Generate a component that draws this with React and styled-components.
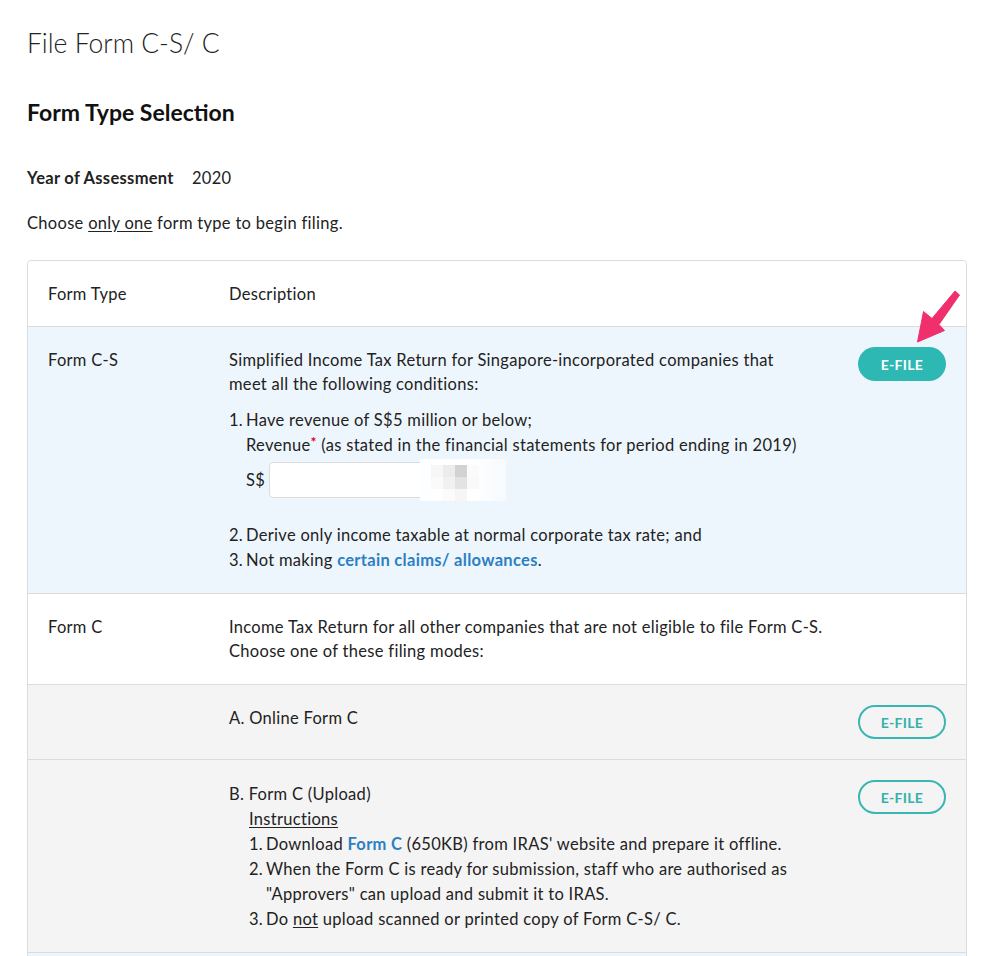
import React from "react";
import styled, { createGlobalStyle, css } from "styled-components";

const Global = createGlobalStyle`
  html, body { margin: 0; padding: 0; background: #fff; }
  body {
    font-family: Lato, "Noto Sans", sans-serif;
    font-size: 16.5px;
    letter-spacing: 0.3px;
    color: #222;
    -webkit-font-smoothing: antialiased;
  }
  * { box-sizing: border-box; }
`;

const Page = styled.div`
  padding: 25px 29px 0 27px;
  height: 956px;
  overflow: hidden;
`;

const Title = styled.h1`
  margin: 0;
  font-size: 26.5px;
  line-height: 36px;
  font-weight: 300;
  letter-spacing: 0;
  color: #222;
`;

const Subtitle = styled.h2`
  margin: 36px 0 0;
  font-size: 23px;
  line-height: 30px;
  font-weight: 700;
  letter-spacing: 0;
  color: #111;
`;

const YearRow = styled.div`
  margin-top: 39px;
  display: flex;
  line-height: 24px;
`;

const YearLabel = styled.span`
  width: 165px;
  font-weight: 700;
`;

const Intro = styled.p`
  margin: 21px 0 0;
  line-height: 24px;
`;

const U = styled.span`
  text-decoration: underline;
  text-underline-offset: 2px;
`;

const Table = styled.div`
  position: relative;
  margin-top: 25px;
  border: 1px solid #dcdcdc;
  border-radius: 4px;
`;

const tones = {
  white: "#ffffff",
  blue: "#eef6fd",
  grey: "#f4f4f4",
};

const Row = styled.div`
  display: flex;
  align-items: flex-start;
  padding: ${(p) => (p.$loose ? "22px" : "21px")} 20px ${(p) => (p.$tall ? "21px" : "20px")} 0;
  background: ${(p) => tones[p.$tone || "white"]};
  line-height: ${(p) => (p.$loose ? "25px" : "24px")};
  min-height: ${(p) => p.$min || 0}px;
  & + & { border-top: 1px solid #dcdcdc; }
  &:first-child { border-radius: 4px 4px 0 0; }
`;

const TypeCell = styled.div`
  width: 201px;
  flex-shrink: 0;
  padding-left: 20px;
`;

const DescCell = styled.div`
  flex: 1;
  min-width: 0;
  white-space: nowrap;
`;

const ActionCell = styled.div`
  width: 88px;
  margin-left: 48px;
  flex-shrink: 0;
`;

const Button = styled.button`
  display: block;
  width: 88px;
  height: 34px;
  margin-top: ${(p) => (p.$lift ? "-2px" : "-1px")};
  border-radius: 17px;
  font-family: Lato, "Noto Sans", sans-serif;
  font-size: 14px;
  font-weight: 700;
  letter-spacing: 0.3px;
  cursor: pointer;
  ${(p) =>
    p.$filled
      ? css`
          background: #2db8b3;
          border: none;
          color: #fff;
        `
      : css`
          background: transparent;
          border: 2px solid #3ab6b2;
          color: #33b1ad;
        `}
`;

const Para = styled.p`
  margin: 0;
`;

const List = styled.div`
  margin-top: ${(p) => p.$mt || 0}px;
  padding-left: ${(p) => p.$indent || 0}px;
  line-height: 25px;
`;

const Item = styled.div`
  display: flex;
  margin-top: ${(p) => p.$mt || 0}px;
`;

const Num = styled.span`
  width: 17px;
  flex-shrink: 0;
`;

const ItemBody = styled.div`
  flex: 1;
`;

const Link = styled.a`
  color: #2b7fc2;
  font-weight: 700;
  text-decoration: none;
`;

const Req = styled.span`
  color: #d0021b;
  font-size: 14px;
  font-weight: 700;
  vertical-align: top;
  line-height: 18px;
`;

const AmountRow = styled.div`
  display: flex;
  align-items: center;
  margin-top: 4px;
  height: 36px;
`;

const Currency = styled.span`
  width: 23px;
`;

const InputWrap = styled.div`
  position: relative;
  width: 236px;
  height: 36px;
`;

const Input = styled.input`
  width: 100%;
  height: 100%;
  border: 1px solid #dcdcdc;
  border-radius: 4px;
  background: #fff;
  padding: 0 10px;
  font-size: 16px;
  font-family: inherit;
  outline: none;
`;

const Mosaic = styled.div`
  position: absolute;
  left: 151px;
  top: -3px;
  width: 86px;
  height: 42px;
  background: linear-gradient(90deg, #fdfeff 0%, #ffffff 60%, #f6fafe 100%);
  display: grid;
  grid-template-columns: 12px 12px 12px 12px;
  grid-template-rows: 12px 12px 12px;
  padding: 6px 0 0 11px;
`;

const Tile = styled.span`
  background: ${(p) => p.$c};
`;

const Arrow = styled.svg`
  position: absolute;
  left: 873px;
  top: 19px;
  width: 70px;
  height: 70px;
  pointer-events: none;
`;

export default function App() {
  return (
    <>
      <Global />
      <Page>
        <Title>File Form C-S/ C</Title>
        <Subtitle>Form Type Selection</Subtitle>
        <YearRow>
          <YearLabel>Year of Assessment</YearLabel>
          <span>2020</span>
        </YearRow>
        <Intro>
          Choose <U>only one</U> form type to begin filing.
        </Intro>

        <Table>
          <Row>
            <TypeCell>Form Type</TypeCell>
            <DescCell>Description</DescCell>
          </Row>

          <Row $tone="blue">
            <TypeCell>Form C-S</TypeCell>
            <DescCell>
              <Para>
                Simplified Income Tax Return for Singapore-incorporated companies that
                <br />
                meet all the following conditions:
              </Para>
              <List $mt={12}>
                <Item>
                  <Num>1.</Num>
                  <ItemBody>
                    Have revenue of S$5 million or below;
                    <br />
                    Revenue<Req>*</Req> (as stated in the financial statements for period ending in 2019)
                    <AmountRow>
                      <Currency>S$</Currency>
                      <InputWrap>
                        <Input aria-label="Revenue" />
                        <Mosaic>
                          <Tile $c="#f7f7f7" />
                          <Tile $c="#ececec" />
                          <Tile $c="#d2d2d2" />
                          <Tile $c="#fbfbfb" />
                          <Tile $c="#fafafa" />
                          <Tile $c="#f1f1f1" />
                          <Tile $c="#e3e3e3" />
                          <Tile $c="#f9f9f9" />
                          <Tile $c="transparent" />
                          <Tile $c="#fbfbfb" />
                          <Tile $c="#f6f6f6" />
                          <Tile $c="transparent" />
                        </Mosaic>
                      </InputWrap>
                    </AmountRow>
                  </ItemBody>
                </Item>
                <Item $mt={25}>
                  <Num>2.</Num>
                  <ItemBody>Derive only income taxable at normal corporate tax rate; and</ItemBody>
                </Item>
                <Item>
                  <Num>3.</Num>
                  <ItemBody>
                    Not making <Link href="#">certain claims/ allowances</Link>.
                  </ItemBody>
                </Item>
              </List>
            </DescCell>
            <ActionCell>
              <Button $filled>E-FILE</Button>
            </ActionCell>
          </Row>

          <Row $tall>
            <TypeCell>Form C</TypeCell>
            <DescCell>
              <Para>
                Income Tax Return for all other companies that are not eligible to file Form C-S.
                <br />
                Choose one of these filing modes:
              </Para>
            </DescCell>
          </Row>

          <Row $tone="grey">
            <TypeCell />
            <DescCell>A. Online Form C</DescCell>
            <ActionCell>
              <Button>E-FILE</Button>
            </ActionCell>
          </Row>

          <Row $tone="grey" $loose>
            <TypeCell />
            <DescCell>
              B. Form C (Upload)
              <List $indent={20}>
                <U>Instructions</U>
                <Item>
                  <Num>1.</Num>
                  <ItemBody>
                    Download <Link href="#">Form C</Link> (650KB) from IRAS' website and prepare it offline.
                  </ItemBody>
                </Item>
                <Item>
                  <Num>2.</Num>
                  <ItemBody>
                    When the Form C is ready for submission, staff who are authorised as
                    <br />
                    "Approvers" can upload and submit it to IRAS.
                  </ItemBody>
                </Item>
                <Item>
                  <Num>3.</Num>
                  <ItemBody>
                    Do <U>not</U> upload scanned or printed copy of Form C-S/ C.
                  </ItemBody>
                </Item>
              </List>
            </DescCell>
            <ActionCell>
              <Button $lift>E-FILE</Button>
            </ActionCell>
          </Row>

          <Row $tone="blue" $min={80} />

          <Arrow viewBox="0 0 70 70">
            <polygon
              points="16.5,62 22.5,31.5 31,38.5 54,11 58.5,15 38,44.5 43.5,50.5"
              fill="#f0306d"
              stroke="#f0306d"
              strokeWidth="1"
              strokeLinejoin="round"
            />
          </Arrow>
        </Table>
      </Page>
    </>
  );
}
